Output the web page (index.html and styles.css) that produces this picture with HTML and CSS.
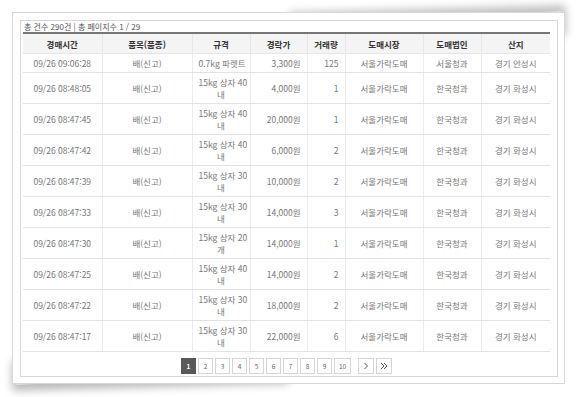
FILE: index.html
```html
<!DOCTYPE html>
<html lang="ko">
<head>
<meta charset="utf-8">
<link rel="stylesheet" href="styles.css">
</head>
<body>
<div class="paper">
  <div class="box">
    <div class="summary">총 건수 290건 | 총 페이지수 1 / 29</div>
    <table class="grid">
      <colgroup>
        <col style="width:79px"><col style="width:90px"><col style="width:58px"><col style="width:57px">
        <col style="width:38px"><col style="width:78px"><col style="width:58px"><col style="width:69px">
      </colgroup>
      <thead>
        <tr><th>경매시간</th><th>품목(품종)</th><th>규격</th><th>경락가</th><th>거래량</th><th>도매시장</th><th>도매법인</th><th>산지</th></tr>
      </thead>
      <tbody>
        <tr class="short"><td>09/26 09:06:28</td><td>배(신고)</td><td>0.7kg 파렛트</td><td class="num">3,300원</td><td class="num">125</td><td>서울가락도매</td><td>서울청과</td><td>경기 안성시</td></tr>
        <tr><td>09/26 08:48:05</td><td>배(신고)</td><td>15kg 상자 40<br>내</td><td class="num">4,000원</td><td class="num">1</td><td>서울가락도매</td><td>한국청과</td><td>경기 화성시</td></tr>
        <tr><td>09/26 08:47:45</td><td>배(신고)</td><td>15kg 상자 40<br>내</td><td class="num">20,000원</td><td class="num">1</td><td>서울가락도매</td><td>한국청과</td><td>경기 화성시</td></tr>
        <tr><td>09/26 08:47:42</td><td>배(신고)</td><td>15kg 상자 40<br>내</td><td class="num">6,000원</td><td class="num">2</td><td>서울가락도매</td><td>한국청과</td><td>경기 화성시</td></tr>
        <tr><td>09/26 08:47:39</td><td>배(신고)</td><td>15kg 상자 30<br>내</td><td class="num">10,000원</td><td class="num">2</td><td>서울가락도매</td><td>한국청과</td><td>경기 화성시</td></tr>
        <tr><td>09/26 08:47:33</td><td>배(신고)</td><td>15kg 상자 30<br>내</td><td class="num">14,000원</td><td class="num">3</td><td>서울가락도매</td><td>한국청과</td><td>경기 화성시</td></tr>
        <tr><td>09/26 08:47:30</td><td>배(신고)</td><td>15kg 상자 20<br>개</td><td class="num">14,000원</td><td class="num">1</td><td>서울가락도매</td><td>한국청과</td><td>경기 화성시</td></tr>
        <tr><td>09/26 08:47:25</td><td>배(신고)</td><td>15kg 상자 40<br>내</td><td class="num">14,000원</td><td class="num">2</td><td>서울가락도매</td><td>한국청과</td><td>경기 화성시</td></tr>
        <tr><td>09/26 08:47:22</td><td>배(신고)</td><td>15kg 상자 30<br>내</td><td class="num">18,000원</td><td class="num">2</td><td>서울가락도매</td><td>한국청과</td><td>경기 화성시</td></tr>
        <tr><td>09/26 08:47:17</td><td>배(신고)</td><td>15kg 상자 30<br>내</td><td class="num">22,000원</td><td class="num">6</td><td>서울가락도매</td><td>한국청과</td><td>경기 화성시</td></tr>
      </tbody>
    </table>
    <div class="pager">
      <span class="pg active">1</span><span class="pg">2</span><span class="pg">3</span><span class="pg">4</span><span class="pg">5</span><span class="pg">6</span><span class="pg">7</span><span class="pg">8</span><span class="pg">9</span><span class="pg wide">10</span>
      <span class="pg arrow first-arrow"><svg width="8" height="8" viewBox="0 0 8 8"><path d="M2.5 1 L5.5 4 L2.5 7" fill="none" stroke="#555" stroke-width="1"/></svg></span>
      <span class="pg arrow"><svg width="8" height="8" viewBox="0 0 8 8"><path d="M1 1 L4 4 L1 7 M4 1 L7 4 L4 7" fill="none" stroke="#555" stroke-width="1"/></svg></span>
    </div>
  </div>
</div>
</body>
</html>
```
FILE: styles.css
```css
html, body {
  margin: 0;
  padding: 0;
  background: #fff;
}
body {
  position: relative;
  z-index: 0;
  font-family: "Noto Sans CJK KR", "Noto Sans", sans-serif;
  color: #777;
  padding: 12px 0 0 12px;
  height: 397px;
  box-sizing: border-box;
}
.paper {
  position: relative;
  width: 537px;
  height: 356px;
  border: 1px solid #d8d8d8;
  background: #fff;
  padding: 7px;
  box-sizing: content-box;
}
.paper::before,
.paper::after {
  content: "";
  position: absolute;
  z-index: -1;
  width: 50%;
  height: 30px;
  background: #fff;
}
.paper::before {
  left: 3px;
  bottom: 2px;
  box-shadow: -4px 6px 8px rgba(0,0,0,0.28);
  transform: rotate(-1.5deg);
}
.paper::after {
  right: 3px;
  top: 2px;
  box-shadow: 4px -6px 8px rgba(0,0,0,0.25);
  transform: rotate(-1.5deg);
}
.box {
  width: 534px;
  height: 355px;
  border: 1px solid #d8d8d8;
  padding: 0 0 0 2px;
  display: flex;
  flex-direction: column;
}
.summary {
  font-size: 8px;
  color: #555;
  height: 11px;
  line-height: 11px;
  padding-left: 1px;
}
.grid {
  width: 527px;
  table-layout: fixed;
  border-collapse: collapse;
  border-top: 2px solid #777;
  font-size: 8.5px;
}
.grid th {
  height: 19px;
  background: #f4f4f4;
  color: #333;
  font-weight: bold;
  font-size: 8.5px;
  padding: 0;
  border-left: 1px solid #e6e6e6;
  border-bottom: 1px solid #e6e6e6;
}
.grid td {
  height: 30px;
  padding: 0 6px;
  text-align: center;
  line-height: 12px;
  border-left: 1px solid #ececec;
  border-bottom: 1px solid #e3e3e3;
  color: #777;
  white-space: nowrap;
}
.grid th:first-child,
.grid td:first-child {
  border-left: none;
}
.grid tr.short td {
  height: 18px;
}
.grid td.num {
  text-align: right;
  padding-right: 6px;
}
.pager {
  display: flex;
  justify-content: center;
  gap: 2px;
  margin-top: 6px;
  width: 527px;
}
.pg {
  width: 13px;
  height: 14px;
  border: 1px solid #d6d6d6;
  font-size: 6.5px;
  color: #666;
  display: flex;
  align-items: center;
  justify-content: center;
  box-sizing: content-box;
  background: #fff;
}
.pg.active {
  background: #595959;
  border-color: #595959;
  color: #fff;
  font-weight: bold;
}
.pg.wide {
  width: 15px;
}
.pg.arrow {
  width: 14px;
}
.pg.first-arrow {
  margin-left: 5px;
}
```
